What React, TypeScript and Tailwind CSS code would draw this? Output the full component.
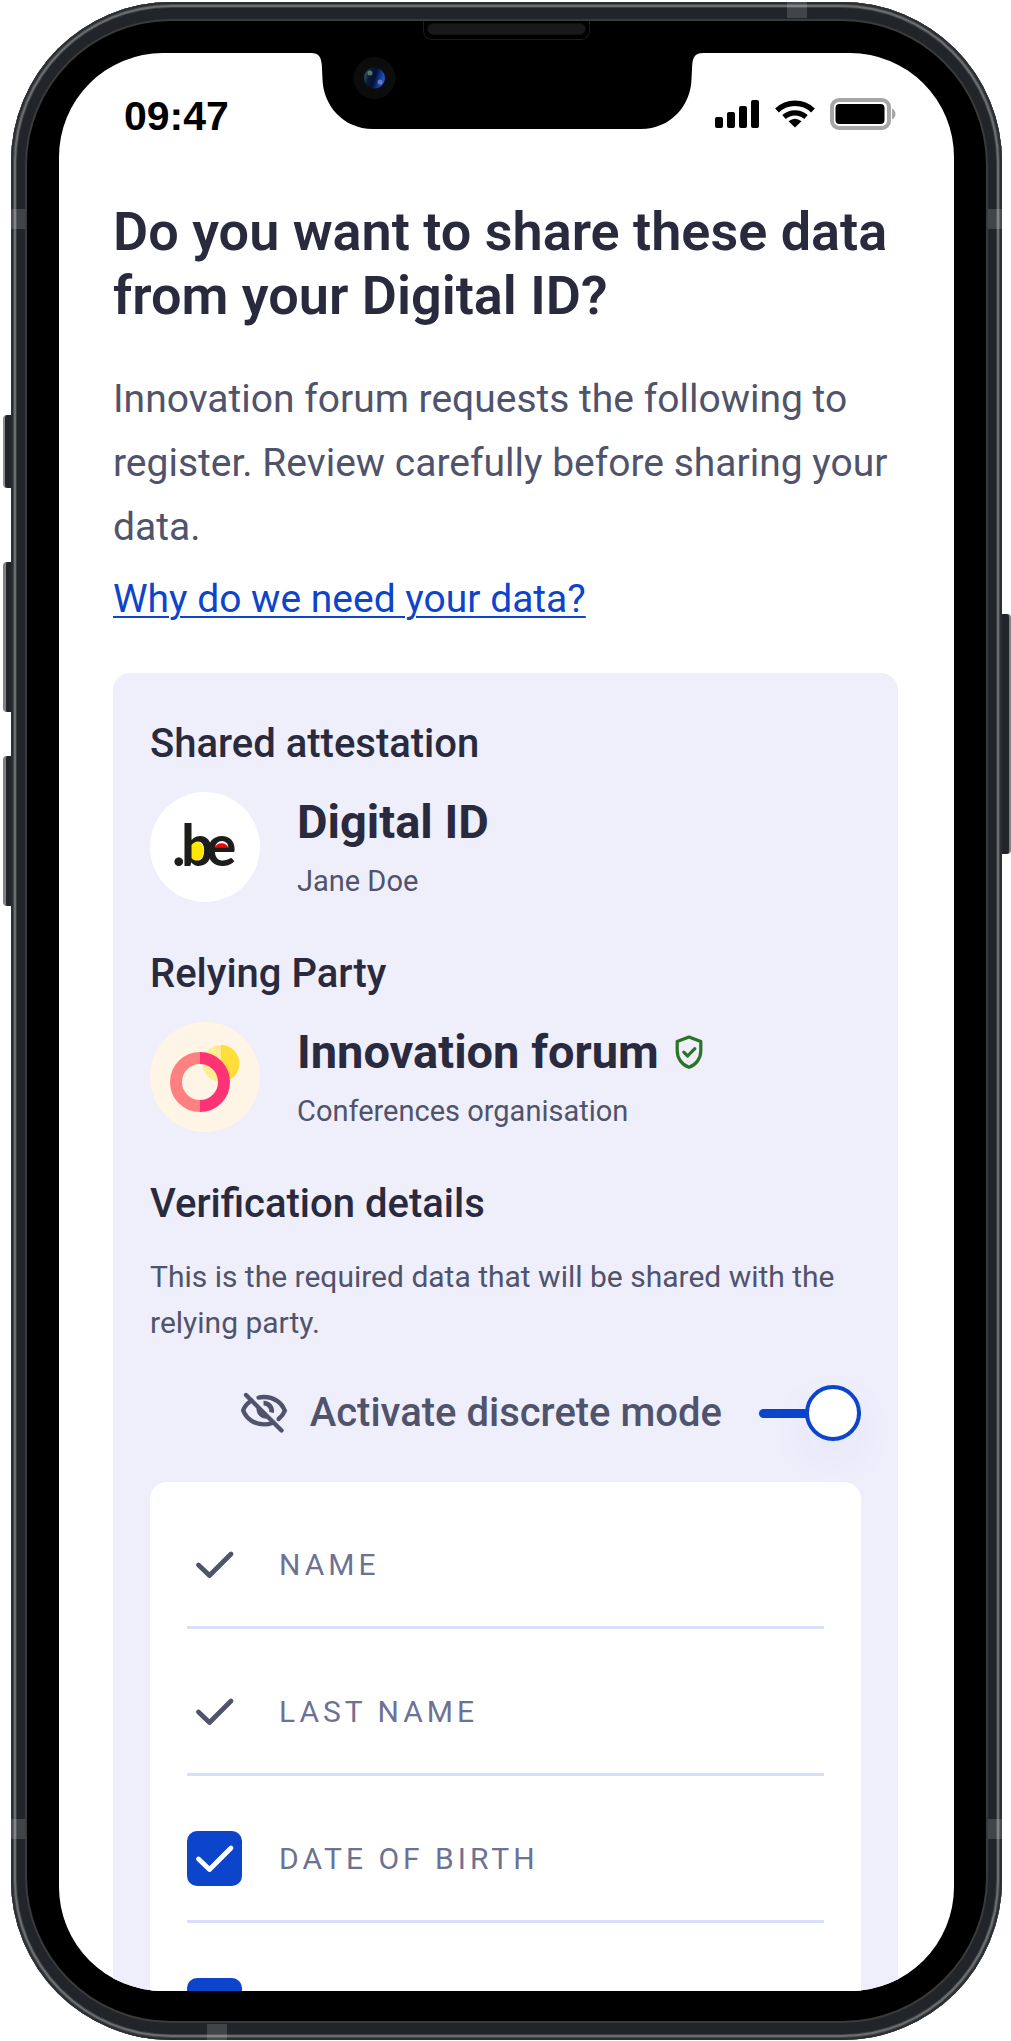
import { useState } from "react";
import type { ReactNode } from "react";

function Check({ className }: { className: string }) {
  return (
    <svg viewBox="0 0 55 55" fill="none" aria-hidden="true" className={className}>
      <path d="M11.500 28 22.500 38.500 44 17" stroke="currentColor" strokeWidth="4.800" strokeLinecap="round" strokeLinejoin="round" />
    </svg>
  );
}

function SignalIcon() {
  return (
    <svg viewBox="0 0 45 30" className="h-[30px] w-[45px]" aria-hidden="true">
      <rect x="0" y="18" width="8" height="11" rx="2" />
      <rect x="12" y="13" width="8" height="16" rx="2" />
      <rect x="24" y="7" width="8" height="22" rx="2" />
      <rect x="36" y="1" width="8" height="28" rx="2" />
    </svg>
  );
}

function WifiIcon() {
  return (
    <svg viewBox="0 0 40 30" className="h-[30px] w-10" aria-hidden="true">
      <path d="M2 11.500A26 26 0 0 1 38 11.500" fill="none" stroke="#000" strokeWidth="5.400" />
      <path d="M9 18A16.500 16.500 0 0 1 31 18" fill="none" stroke="#000" strokeWidth="5.200" />
      <path d="M20 28.500 13.500 22.300Q20 17 26.500 22.300Z" />
    </svg>
  );
}

function BatteryIcon() {
  return (
    <svg viewBox="0 0 66 32" className="h-8 w-[66px]" aria-hidden="true">
      <rect x="2" y="2" width="57" height="28" rx="7" fill="none" stroke="#a6a6a6" strokeWidth="4" />
      <rect x="5.500" y="6" width="49" height="20" rx="4" />
      <path d="M62 10.500Q65.500 12.500 65.500 16T62 21.500Z" fill="#a6a6a6" />
    </svg>
  );
}

function EyeOffIcon() {
  return (
    <svg viewBox="0 0 48 42" fill="none" stroke="currentColor" strokeWidth="4.400" strokeLinecap="round" className="h-[42px] w-12 text-[#50536c]" aria-hidden="true">
      <path d="M11.500 8.500C7.500 11 4.500 14.500 3.200 18.500 6.500 27 14.500 32.400 24 32.400 27.200 32.400 30.200 31.800 33 30.700" />
      <path d="M18.500 5.600A24 24 0 0 1 24 5C33.500 5 41.500 10.300 44.800 18.700 43.500 22 41.300 24.800 38.600 27" />
      <path d="M23.500 11.200A7.800 7.800 0 0 1 31.500 20.500" strokeWidth="4.800" strokeLinecap="butt" />
      <path d="M17 14.200 29.200 26.300A9.700 9.700 0 0 1 17 14.200Z" fill="currentColor" stroke="none" />
      <path d="M6 3 41.500 38.500" />
    </svg>
  );
}

function VerifiedIcon() {
  return (
    <svg viewBox="0 0 28 34" fill="none" stroke="#2a7327" strokeWidth="3.200" strokeLinecap="round" strokeLinejoin="round" className="h-[34px] w-7" aria-label="Verified">
      <path d="M14 2 25.800 6.500V15.500C25.800 23.500 21 30 14 32.300 7 30 2.200 23.500 2.200 15.500V6.500Z" />
      <path d="M8.800 17.200 12.600 21 19.800 13.700" />
    </svg>
  );
}

function BeLogo() {
  return (
    <svg viewBox="0 0 110 110" className="size-[110px] shrink-0 rounded-full bg-white" role="img" aria-label=".be">
      <ellipse cx="46" cy="59" rx="8" ry="10" fill="#ffe900" />
      <path d="M64 57A8 9 0 0 1 79 57Z" fill="#f80000" />
      <text y="74" x="22 31 56" fontSize="57" fontWeight="700" fill="#1d1d1b" className="font-['Lato',sans-serif]">.be</text>
    </svg>
  );
}

function ForumLogo() {
  return (
    <svg viewBox="0 0 110 110" className="size-[110px] shrink-0 rounded-full bg-[#fff5e6]" role="img" aria-label="Innovation forum logo">
      <path d="M71 23A18.500 18.500 0 0 0 71 60Z" fill="#ffec93" />
      <path d="M71 23A18.500 18.500 0 0 1 71 60Z" fill="#ffdd3a" />
      <path d="M50 36A24 24 0 0 0 50 84" fill="none" stroke="#fe8080" strokeWidth="12" />
      <path d="M50 36A24 24 0 0 1 50 84" fill="none" stroke="#fe3375" strokeWidth="12" />
    </svg>
  );
}

function Notch() {
  return (
    <div className="absolute inset-x-0 top-0 flex justify-center">
      <svg viewBox="0 0 400 78" className="h-[78px] w-[400px]" aria-hidden="true">
        <defs>
          <linearGradient id="lens" x1="0" y1="0" x2="1" y2="0.300">
            <stop offset="0" stopColor="#41705f" />
            <stop offset="0.350" stopColor="#0c1a2c" />
            <stop offset="0.600" stopColor="#04103a" />
            <stop offset="1" stopColor="#1f55c8" />
          </linearGradient>
        </defs>
        <path d="M0 0H4C12 0 14 4 14.800 12L15.500 26C16 52 36 76 66 76H334C364 76 384 52 384.500 26L385.200 12C386 4 388 0 396 0H400Z" />
        <circle cx="67.500" cy="25" r="21" fill="#0c0c0c" />
        <circle cx="67.500" cy="25" r="10.500" fill="url(#lens)" />
        <circle cx="63" cy="20" r="2.500" fill="#6d9a8b" opacity="0.700" />
        <circle cx="73" cy="29" r="2.500" fill="#8a8fc8" opacity="0.700" />
      </svg>
    </div>
  );
}

function Hardware() {
  return (
    <div aria-hidden="true">
      <div className="absolute top-[415px] left-[3px] h-[73px] w-2 rounded-l-sm border-l-2 border-[#8b8d8f] bg-[#212529]" />
      <div className="absolute top-[562px] left-[3px] h-[150px] w-2 rounded-l-sm border-l-3 border-[#7e8082] bg-[#212529]" />
      <div className="absolute top-[756px] left-[3px] h-[150px] w-2 rounded-l-sm border-l-3 border-[#7e8082] bg-[#212529]" />
      <div className="absolute top-[614px] right-0 h-[240px] w-[9px] rounded-r-sm border-r-2 border-[#7e8082] bg-[#212529]" />
    </div>
  );
}

function AntennaBands() {
  return (
    <div aria-hidden="true">
      <div className="absolute top-0 right-[195px] h-4 w-5 bg-white/15" />
      <div className="absolute bottom-0 left-[196px] h-4 w-5 bg-white/15" />
      <div className="absolute top-[207px] left-0 h-5 w-[14px] bg-white/15" />
      <div className="absolute top-[207px] right-0 h-5 w-[14px] bg-white/15" />
      <div className="absolute bottom-[201px] left-0 h-5 w-[14px] bg-white/15" />
      <div className="absolute right-0 bottom-[201px] h-5 w-[14px] bg-white/15" />
    </div>
  );
}

function StatusBar() {
  return (
    <header className="flex h-[122px] items-center justify-between pr-[58px] pl-[65px]">
      <time className="pt-1 font-['Liberation_Sans',sans-serif] text-[41px] leading-[48px] font-bold text-black">09:47</time>
      <div className="flex items-center gap-[15px]">
        <SignalIcon />
        <WifiIcon />
        <BatteryIcon />
      </div>
    </header>
  );
}

function Entity({ logo, name, detail, badge }: { logo: ReactNode; name: string; detail: string; badge?: ReactNode }) {
  return (
    <div className="mt-6 flex gap-[37px]">
      {logo}
      <div>
        <div className="flex items-center gap-4">
          <h3 className="text-[47px] leading-[60px] font-bold text-[#292a3d]">{name}</h3>
          {badge}
        </div>
        <p className="mt-2 text-[29px] leading-[42px]">{detail}</p>
      </div>
    </div>
  );
}

function SectionTitle({ children }: { children: ReactNode }) {
  return <h2 className="text-[40px] leading-[48px] font-medium text-[#292a3d]">{children}</h2>;
}

type Field = { id: string; label?: string; required: boolean };

const fields: Field[] = [
  { id: "name", label: "NAME", required: true },
  { id: "last-name", label: "LAST NAME", required: true },
  { id: "birth-date", label: "DATE OF BIRTH", required: false },
  { id: "additional", required: false },
];

function FieldRow({ id, label, required }: Field) {
  const text = "text-[30px] leading-[46px] tracking-[4px] text-[#6d7294]";
  return (
    <li className="flex items-center gap-[37px] border-b-3 border-[#dbdefb] pt-[55px] pb-[34px]">
      {required ? (
        <>
          <Check className="size-[55px] text-[#50536c]" />
          <span className={text}>{label}</span>
        </>
      ) : (
        <>
          <span className="relative flex size-[55px]">
            <input
              id={id}
              type="checkbox"
              defaultChecked
              aria-label={label ?? "Additional data"}
              className="peer size-[55px] appearance-none rounded-[10px] border-3 border-[#0d44cc] checked:bg-[#0d44cc]"
            />
            <Check className="pointer-events-none absolute inset-0 hidden text-white peer-checked:block" />
          </span>
          {label && <label htmlFor={id} className={text}>{label}</label>}
        </>
      )}
    </li>
  );
}

function DiscreteToggle() {
  const [on, setOn] = useState(true);
  return (
    <div className="mt-[39px] flex h-14 items-center justify-end">
      <EyeOffIcon />
      <label htmlFor="discrete" className="ml-[22px] text-[40px] leading-[48px] font-medium">Activate discrete mode</label>
      <span className="relative ml-[37px] flex h-14 w-[102px] items-center">
        <span className="h-[9px] w-full rounded-full bg-[#0d44cc]" />
        <input
          id="discrete"
          type="checkbox"
          role="switch"
          checked={on}
          onChange={() => setOn(!on)}
          className="absolute left-0 size-14 appearance-none rounded-full border-4 border-[#0d44cc] bg-white shadow-[0_18px_50px_rgba(13,68,204,0.05)] checked:right-0 checked:left-auto"
        />
      </span>
    </div>
  );
}

export default function App() {
  return (
    <div className="relative h-screen overflow-hidden bg-white pt-[2px] pr-[9px] pb-px pl-[11px] font-['Roboto',sans-serif] text-[#50536c]">
      <Hardware />
      <div className="relative h-full rounded-[160px] bg-[#212529] px-4 py-[19px] shadow-[inset_0_0_0_2px_#2b2e32,inset_0_0_0_3px_#45484b,inset_0_0_0_5px_#6b6e71,inset_0_0_0_6px_#3b3e41]">
        <AntennaBands />
        <div className="relative h-full rounded-[144px] bg-black px-8 pt-8 pb-[30px] shadow-[0_0_0_2px_#3a3a3a]">
          <div className="absolute inset-x-0 top-0 flex justify-center" aria-hidden="true">
            <div className="h-[19px] w-[167px] rounded-b-[9px] border border-t-0 border-[#1c1c1c] px-[3px] pt-[2px]">
              <div className="h-3 rounded-full border border-[#101010] bg-[#191919]" />
            </div>
          </div>
          <div className="relative h-full overflow-hidden rounded-[104px] bg-white">
            <Notch />
            <StatusBar />
            <main className="pt-[25px] pr-[56px] pl-[54px]">
              <h1 className="text-[54px] leading-[64px] font-semibold text-[#292a3d]">Do you want to share these data from your Digital ID?</h1>
              <p className="mt-[39px] text-[39px] leading-[64px]">
                Innovation forum requests the following to register. Review carefully before sharing your data.
              </p>
              <a href="#why" className="mt-2 block w-fit text-[39px] leading-[64px] text-[#0d44cc] underline decoration-2 underline-offset-4">
                Why do we need your data?
              </a>
              <section className="mt-[42px] rounded-t-[17px] bg-[#efeefb] px-[37px] pt-[47px]">
                <SectionTitle>Shared attestation</SectionTitle>
                <Entity logo={<BeLogo />} name="Digital ID" detail="Jane Doe" />
                <div className="mt-12">
                  <SectionTitle>Relying Party</SectionTitle>
                  <Entity logo={<ForumLogo />} name="Innovation forum" detail="Conferences organisation" badge={<VerifiedIcon />} />
                </div>
                <div className="mt-12">
                  <SectionTitle>Verification details</SectionTitle>
                  <p className="mt-[26px] text-[30px] leading-[46px]">This is the required data that will be shared with the relying party.</p>
                  <DiscreteToggle />
                  <ul className="mt-[41px] rounded-t-[17px] bg-white px-[37px]">
                    {fields.map((field) => (
                      <FieldRow key={field.id} {...field} />
                    ))}
                  </ul>
                </div>
              </section>
            </main>
          </div>
        </div>
      </div>
    </div>
  );
}
